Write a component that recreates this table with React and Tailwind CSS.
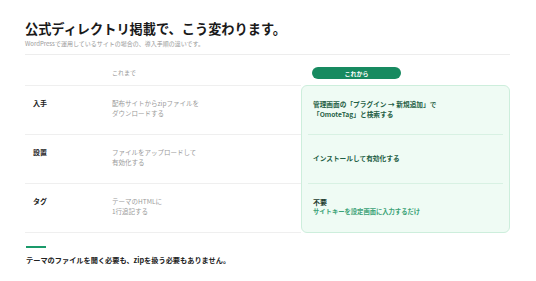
const rows = [
  {
    label: '入手',
    before: ['配布サイトからzipファイルを', 'ダウンロードする'],
  },
  {
    label: '設置',
    before: ['ファイルをアップロードして', '有効化する'],
  },
  {
    label: 'タグ',
    before: ['テーマのHTMLに', '1行追記する'],
  },
];

function AfterCell({ index }) {
  if (index === 0) {
    return (
      <div className="text-[6.7px] leading-[10px] font-bold text-[#1f5f45]">
        <p>管理画面の「プラグイン → 新規追加」で</p>
        <p>「OmoteTag」と検索する</p>
      </div>
    );
  }
  if (index === 1) {
    return (
      <p className="text-[6.7px] leading-[10px] font-bold text-[#1f5f45]">
        インストールして有効化する
      </p>
    );
  }
  return (
    <div>
      <p className="text-[7px] leading-[10px] font-bold text-[#1b3a2d]">不要</p>
      <p className="text-[6.3px] leading-[10px] font-semibold text-[#3aa276]">
        サイトキーを設定画面に入力するだけ
      </p>
    </div>
  );
}

export default function App() {
  return (
    <div
      className="w-[536px] h-[281px] bg-white overflow-hidden pt-[21px] pl-[25px] pr-[26px]"
      style={{ fontFamily: '"Noto Sans CJK JP", "Noto Sans", sans-serif' }}
    >
      <h1 className="text-[13.2px] leading-[16px] font-bold text-[#1a1a1a]">
        公式ディレクトリ掲載で、こう変わります。
      </h1>
      <p className="mt-[3px] text-[6px] leading-[8px] text-[#999]">
        WordPressで運用しているサイトの場合の、導入手順の違いです。
      </p>
      <div className="mt-[6px] border-t border-[#ededed]" />

      {/* column headers */}
      <div className="flex h-[30px] items-end pb-[6px]">
        <div className="w-[86px]" />
        <div className="w-[190px] pl-[1px] text-[6px] leading-[12px] text-[#999]">これまで</div>
        <div className="pl-[11px]">
          <div className="w-[89px] h-[12px] rounded-full bg-[#178a60] flex items-center justify-center text-[6px] font-bold text-white">
            これから
          </div>
        </div>
      </div>

      {/* comparison */}
      <div className="flex">
        <div className="w-[276px] border-t border-[#efefef]">
          {rows.map((row) => (
            <div key={row.label} className="flex h-[49px] border-b border-[#efefef] pt-[12px]">
              <div className="w-[86px] pl-[8px] text-[7px] leading-[10px] font-bold text-[#222]">
                {row.label}
              </div>
              <div className="pl-[1px] text-[6.5px] leading-[10px] text-[#9a9a9a]">
                {row.before.map((line) => (
                  <p key={line}>{line}</p>
                ))}
              </div>
            </div>
          ))}
        </div>

        <div className="w-[209px] h-[148px] rounded-[6px] border border-[#cdeedc] bg-[#effbf4] px-[6px] flex flex-col">
          {rows.map((row, i) => (
            <div
              key={row.label}
              className={`flex items-center pl-[5px] pb-[2px] ${
                i < 2 ? 'h-[49px] border-b border-[#d8f1e3]' : 'flex-1'
              }`}
            >
              <AfterCell index={i} />
            </div>
          ))}
        </div>
      </div>

      <div className="mt-[13px] ml-[1px] w-[20px] h-[2px] bg-[#1a9a6a]" />
      <p className="mt-[7px] ml-[1px] text-[7.2px] leading-[10px] font-bold text-[#222]">
        テーマのファイルを開く必要も、zipを扱う必要もありません。
      </p>
    </div>
  );
}
